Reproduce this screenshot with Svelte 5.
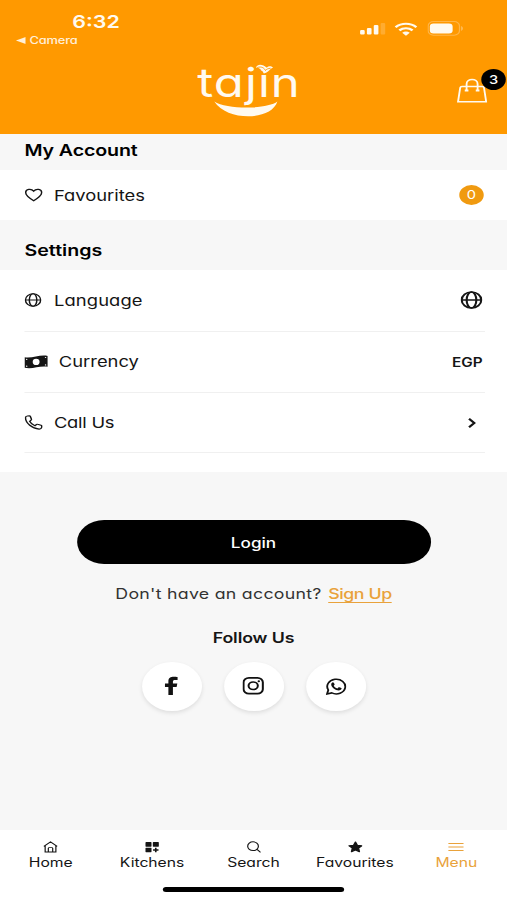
<script lang="ts">
	let favouriteCount: number = 0;
	let cartCount: number = 3;
	let currency: string = 'EGP';
	let active: string = 'Menu';

	const tabs: string[] = ['Home', 'Kitchens', 'Search', 'Favourites', 'Menu'];
	const socials: string[] = ['facebook', 'instagram', 'whatsapp'];
</script>

{#snippet globe(size: number, weight: number)}
	<svg width={size} height={size} viewBox="0 0 20 20" fill="none" stroke="currentColor" stroke-width={weight}>
		<circle cx="10" cy="10" r="8.9" />
		<ellipse cx="10" cy="10" rx="4.4" ry="8.9" />
		<path d="M1.1 10h17.8" />
	</svg>
{/snippet}

<div class="screen">
	<header>
		<div class="status">
			<div class="clock">
				<span class="time">6:32</span>
				<span class="back"><svg width="8" height="7" viewBox="0 0 8 7"><path d="M0 3.5 8 0v7z" fill="currentColor" /></svg>Camera</span>
			</div>
			<div class="signals">
				<svg width="21" height="12" viewBox="0 0 21 12" fill="currentColor">
					<rect x="0" y="7" width="3.8" height="4.6" rx="1" />
					<rect x="5.6" y="5" width="3.8" height="6.6" rx="1" />
					<rect x="11.2" y="2" width="3.8" height="9.6" rx="1" />
					<rect x="16.8" y="0" width="3.8" height="11.6" rx="1" opacity="0.2" />
				</svg>
				<svg class="wifi" width="19" height="14" viewBox="0 0 19 14" fill="none" stroke="currentColor" stroke-width="2.2">
					<path d="M1 5.2c4.8-4.6 12.2-4.6 17 0M4.1 8.4c3.1-2.9 7.7-2.9 10.8 0" />
					<path d="M6.4 10.7c1.9-1.6 4.3-1.6 6.2 0L9.5 13.8z" fill="currentColor" stroke="none" />
				</svg>
				<svg width="30" height="15" viewBox="0 0 30 15">
					<rect x="0.6" y="0.6" width="25.6" height="13.6" rx="4.4" fill="none" stroke="currentColor" opacity="0.3" />
					<rect x="2" y="2.6" width="18.6" height="9.8" rx="3" fill="currentColor" />
					<path d="M27.6 5c1.8.8 1.8 4 0 4.8z" fill="currentColor" opacity="0.4" />
				</svg>
			</div>
		</div>

		<div class="logo">
			<span>tajin</span>
			<svg width="84" height="56" viewBox="0 0 84 56" fill="currentColor">
				<path d="M14 39.500c10 8 43 8 51.500 0-5 19.500-41 20-51.500 0z" />
				<path d="M48 5.500c1.500-4.500 6-3 8.800.2 1.800-2.200 4.200-1.800 5.200.1-2 .2-3.500 4.600-7.600 5.700-1.300-3.600-3.400-5.600-6.400-6z" />
				<path d="M49 5.500c4-1.500 6 1 6.800 3 .8-1.300 2-2 4.200-2.300" fill="none" stroke="#ff9900" stroke-width="0.8" />
			</svg>
		</div>

		<div class="cart">
			<svg width="25" height="26" viewBox="0 0 25 26" fill="none" stroke="currentColor" stroke-width="1.5">
				<path d="M4.200 9.500h16.600q1.200 0 1.400 1.200l1.800 14.100H1l1.800-14.100Q3 9.500 4.200 9.500zM8 13.500V7c0-6 9-6 9 0v6.500" />
				<path d="M6.500 13.500h3M15.500 13.500h3" stroke-width="1.900" />
			</svg>
			<span class="cart-count">{cartCount}</span>
		</div>
	</header>

	<h2 class="account">My Account</h2>
	<div class="list">
		<div class="row short">
			<svg class="icon" width="15" height="14" viewBox="0 0 16 15" fill="none" stroke="currentColor" stroke-width="1.300">
				<path d="M8 13.700C3.500 10.400 1 8 1 4.900 1 1.100 5.800.1 8 3.400 10.200.1 15 1.100 15 4.900c0 3.100-2.500 5.500-7 8.800z" />
			</svg>
			<span class="name">Favourites</span>
			<span class="count">{favouriteCount}</span>
		</div>
	</div>

	<h2>Settings</h2>
	<div class="list settings">
		<div class="row">
			<span class="icon globe">{@render globe(14, 1.7)}</span>
			<span class="name language">Language</span>
			<span class="value">{@render globe(18, 1.9)}</span>
		</div>
		<div class="row currency-row">
			<svg class="icon" width="19" height="14" viewBox="0 0 19 14">
				<path d="M0 2.300C7 3.500 12-.6 19 .9V11.800C12 10.400 7 14.600 0 12.800z" fill="currentColor" />
				<ellipse cx="9.500" cy="6.900" rx="2.800" ry="3.100" fill="#fff" />
				<g fill="#fff">
					<circle cx="1.800" cy="4.300" r="0.600" />
					<circle cx="1.800" cy="11.200" r="0.600" />
					<circle cx="17.200" cy="2.500" r="0.600" />
					<circle cx="17.200" cy="9.900" r="0.600" />
				</g>
			</svg>
			<span class="name">Currency</span>
			<span class="value currency">{currency}</span>
		</div>
		<div class="row call">
			<svg class="icon" width="15" height="15" viewBox="0 0 15 15" fill="none" stroke="currentColor" stroke-width="1.2">
				<path d="M2.400 1 4 .9q.6 0 .8.6l.9 2.700q.1.5-.3.900L4.200 6.300c.8 1.900 2.300 3.500 4.300 4.400l1.300-1.200q.4-.4.9-.2l2.800.9q.6.3.6.9l-.1 1.400q-.3 1.700-2.100 1.600C6.200 13.600 1 8.200.8 2.700.8 1.600 1.500 1.100 2.400 1z" />
			</svg>
			<span class="name call-us">Call Us</span>
			<svg class="value chevron" width="7" height="10" viewBox="0 0 7 10" fill="none" stroke="currentColor" stroke-width="1.900">
				<path d="m1 .8 4.300 4.200L1 9.200" />
			</svg>
		</div>
	</div>

	<main>
		<button class="login">Login</button>
		<p class="signup">Don't have an account? <a href="#signup">Sign Up</a></p>
		<h3>Follow Us</h3>
		<div class="socials">
			{#each socials as social}
				<a class="social" href="#{social}" aria-label={social}>
					{#if social === 'facebook'}
						<svg width="12" height="20" viewBox="0 0 12 20" fill="currentColor">
							<path d="M3.500 19V11H.7V7.400h2.800V5C3.500 1.700 5.400.7 7.800.7c1.300 0 2.500.2 3.200.3v3.100H9c-1.400 0-1.800.6-1.800 1.600v1.700h3.600L10.200 11h-3v8z" />
						</svg>
					{:else if social === 'instagram'}
						<svg width="17.5" height="17.5" viewBox="0 0 18 18" fill="none" stroke="currentColor" stroke-width="1.700">
							<rect x="0.900" y="0.900" width="16.200" height="16.200" rx="4.500" />
							<circle cx="9" cy="9" r="3.900" />
							<circle cx="13.700" cy="4.300" r="1" fill="currentColor" stroke="none" />
						</svg>
					{:else}
						<svg width="17" height="17" viewBox="0 0 18 18">
							<path d="M1.100 16.900 2.200 12.700A7.800 7.800 0 1 1 5.200 15.800z" fill="none" stroke="currentColor" stroke-width="1.600" />
							<path d="M5.700 4.800q.6-.6 1.200.1l.8 1.800q.1.400-.8 1.400c.7 1.400 1.700 2.300 3.200 2.900l1-1.100q.3-.3.7-.1l1.700.9c.7.4-.2 2.500-2.200 2.500C8.200 13 4.700 9.600 4.700 6.800q0-1.200 1-2z" fill="currentColor" />
						</svg>
					{/if}
				</a>
			{/each}
		</div>
	</main>

	<nav>
		<div class="tabs">
			{#each tabs as tab}
				<div class="tab" class:active={tab === active}>
					<svg width="12.5" height="14" viewBox="0 0 14 14" fill="none" stroke="currentColor" stroke-width="1.100">
						{#if tab === 'Home'}
							<path d="M.9 6.300 7 1.200l6.100 5.100M2.100 5.200v7.500h9.800V5.200M5 12.700V8.400q0-.7.7-.7h2.600q.7 0 .7.7v4.300" />
						{:else if tab === 'Kitchens'}
							<g fill="currentColor" stroke="none">
								<rect x="0.900" y="1.500" width="5.500" height="5.100" rx="0.500" />
								<rect x="7.600" y="1.500" width="5.500" height="5.100" rx="0.500" />
								<rect x="0.900" y="7.700" width="5.500" height="5.100" rx="0.500" />
							</g>
							<path d="M10.300 7.900v5M7.800 10.400h5" stroke-width="1.500" />
						{:else if tab === 'Search'}
							<circle cx="6.300" cy="6.100" r="4.900" />
							<path d="m9.900 9.700 3.300 3.400" />
						{:else if tab === 'Favourites'}
							<path d="m7 1.500 1.700 3.600 4.100.5-3 2.700.8 4L7 10.400l-3.600 1.900.8-4-3-2.700 4.100-.5z" fill="currentColor" stroke-width="1.300" stroke-linejoin="round" />
						{:else}
							<path d="M0 3h14M0 7h14M0 11h14" />
						{/if}
					</svg>
					<span>{tab}</span>
				</div>
			{/each}
		</div>
		<div class="home-bar"></div>
	</nav>
</div>

<style>
	:global(body) {
		background: #f7f7f7;
		overflow: hidden;
	}

	.screen {
		display: flex;
		flex-direction: column;
		width: 414px;
		height: 900px;
		background: #f7f7f7;
		color: #151515;
		font-family: Inter, 'Noto Sans', sans-serif;
		font-feature-settings: 'cv11';
		transform: scaleX(1.22464);
		transform-origin: 0 0;
	}

	svg {
		display: block;
		flex: none;
	}

	header {
		position: relative;
		box-sizing: border-box;
		height: 134px;
		background: #ff9900;
		color: #fffaf0;
	}

	.status {
		display: flex;
		justify-content: space-between;
		padding: 10px 35px 0 13px;
	}

	.clock {
		display: flex;
		flex-direction: column;
	}

	.time {
		padding-left: 46px;
		font-size: 17.500px;
		font-weight: 600;
		line-height: 23px;
	}

	.back {
		display: flex;
		align-items: center;
		gap: 3px;
		font-size: 10.500px;
		font-weight: 500;
		line-height: 15px;
		letter-spacing: -0.1px;
		opacity: 0.9;
	}

	.signals {
		display: flex;
		align-items: center;
		height: 37px;
	}

	.wifi {
		margin: 0 8px 0 7px;
	}

	.logo {
		position: absolute;
		left: 161px;
		top: 62px;
		width: 84px;
		height: 56px;
	}

	.logo span {
		font-size: 40px;
		font-weight: 400;
		line-height: 42px;
		letter-spacing: 0.9px;
	}

	.logo svg {
		position: absolute;
		left: 0;
		top: 0;
	}

	.cart {
		position: absolute;
		left: 373px;
		top: 77px;
	}

	.cart-count {
		position: absolute;
		left: 20px;
		top: -8px;
		width: 20px;
		height: 21px;
		border-radius: 50%;
		background: #000;
		color: #fff;
		font-size: 12px;
		font-weight: 500;
		line-height: 21px;
		text-align: center;
	}

	h2 {
		box-sizing: border-box;
		height: 50px;
		margin: 0;
		padding: 5px 20px 0;
		color: #000;
		font-size: 16px;
		font-weight: 600;
		line-height: 50px;
	}

	h2.account {
		height: 36px;
		padding-top: 0;
		line-height: 32px;
		letter-spacing: -0.1px;
	}

	.list {
		padding: 0 18px 0 20px;
		background: #fff;
	}

	.settings {
		height: 202px;
	}

	.row {
		display: flex;
		align-items: center;
		box-sizing: border-box;
		height: 61.500px;
		border-bottom: 1px solid #f0f0f0;
	}

	.row.short {
		height: 50px;
		border: 0;
	}

	.row.call {
		height: 60px;
	}

	.icon {
		margin-right: 9px;
	}

	.icon.globe {
		margin-right: 10px;
	}

	.name {
		font-size: 15px;
	}

	.language {
		letter-spacing: 0.1px;
	}

	.call-us {
		letter-spacing: -0.2px;
	}

	.value,
	.count {
		margin-left: auto;
	}

	.value {
		margin-right: 2px;
	}

	.count {
		width: 20px;
		height: 20px;
		margin-right: 1px;
		border-radius: 50%;
		background: #f09a10;
		color: #fff;
		font-size: 12px;
		line-height: 20px;
		text-align: center;
	}

	.currency {
		padding-top: 1px;
		font-size: 12.500px;
		font-weight: 600;
	}

	.chevron {
		margin-right: 7.500px;
	}

	main {
		display: flex;
		flex: 1;
		flex-direction: column;
		align-items: center;
		padding-top: 48px;
	}

	.login {
		width: 289px;
		height: 44px;
		padding: 0;
		border: 0;
		border-radius: 22px;
		background: #000;
		color: #fff;
		font: inherit;
		font-size: 14px;
		font-weight: 500;
	}

	.signup {
		margin: 19px 0 0;
		color: #333;
		font-size: 14.500px;
		line-height: 22px;
		letter-spacing: 0.220px;
		white-space: nowrap;
	}

	.signup a {
		color: #e9a23b;
		font-weight: 500;
		letter-spacing: -0.350px;
		margin-left: 1px;
		text-underline-offset: 3px;
	}

	h3 {
		margin: 22px 0 0;
		font-size: 14.500px;
		font-weight: 600;
		line-height: 22px;
		letter-spacing: -0.1px;
	}

	.socials {
		display: flex;
		gap: 18px;
		margin-top: 13px;
	}

	.social {
		display: flex;
		align-items: center;
		justify-content: center;
		box-sizing: border-box;
		width: 49px;
		height: 49px;
		padding-bottom: 1px;
		border-radius: 50%;
		background: #fff;
		box-shadow: 0 2px 4px rgba(0, 0, 0, 0.1);
		color: #111;
	}

	nav {
		height: 70.500px;
		background: #fff;
	}

	.tabs {
		display: grid;
		grid-template-columns: repeat(5, 1fr);
		padding-top: 10px;
	}

	.tab {
		display: flex;
		flex-direction: column;
		align-items: center;
		font-size: 12.800px;
		line-height: 17px;
	}

	.tab.active {
		color: #e9a23b;
	}

	.home-bar {
		width: 148px;
		height: 5px;
		margin: 16.500px auto 0;
		border-radius: 3px;
		background: #000;
	}
</style>
